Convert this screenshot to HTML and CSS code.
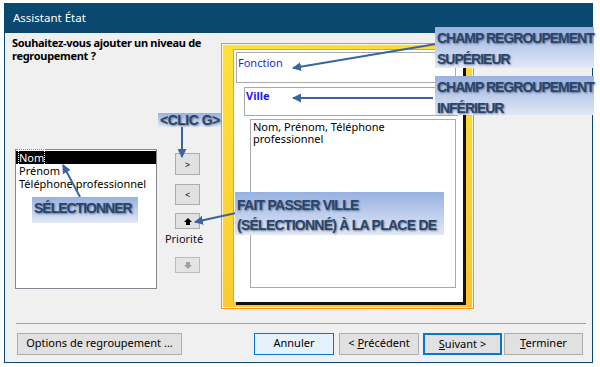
FILE: index.html
```html
<!DOCTYPE html>
<html lang="fr">
<head>
  <meta charset="UTF-8" />
  <title>Assistant État</title>
  <link rel="stylesheet" href="styles.css">
</head>
<body>
  <div class="window">
    <div class="title-bar">Assistant État</div>
    <div class="client">
      <div class="main">
        <div class="left-pane">
          <p class="question">Souhaitez-vous ajouter un niveau de<br />regroupement ?</p>
          <div class="picker">
            <ul class="field-list">
              <li class="selected"><span>Nom</span></li>
              <li>Prénom</li>
              <li>Téléphone professionnel</li>
            </ul>
            <div class="move-buttons">
              <button class="small-btn btn-add">&gt;</button>
              <button class="small-btn btn-remove">&lt;</button>
              <button class="small-btn btn-up">
                <svg width="8" height="7" viewBox="0 0 8 7"><polygon points="4,0 8,4 6,4 6,7 2,7 2,4 0,4" fill="#000"/></svg>
              </button>
              <span class="priority">Priorité</span>
              <button class="small-btn btn-down" disabled>
                <svg width="8" height="7" viewBox="0 0 8 7"><polygon points="4,7 8,3 6,3 6,0 2,0 2,3 0,3" fill="#a0a0a0"/></svg>
              </button>
            </div>
          </div>
        </div>

        <div class="preview-frame">
          <div class="preview-page">
            <div class="group-box level-1"><span class="field-name">Fonction</span></div>
            <div class="group-box level-2"><span class="field-name strong">Ville</span></div>
            <div class="detail-box">Nom, Prénom, Téléphone<br />professionnel</div>
          </div>
        </div>
      </div>

      <div class="separator"></div>

      <div class="footer">
        <button class="footer-btn btn-options">Options de re<u>g</u>roupement ...</button>
        <button class="footer-btn btn-cancel">Annuler</button>
        <button class="footer-btn btn-prev">&lt; <u>P</u>récédent</button>
        <button class="footer-btn btn-next"><u>S</u>uivant &gt;</button>
        <button class="footer-btn btn-finish"><u>T</u>erminer</button>
      </div>
    </div>
  </div>

  <!-- Annotations -->
  <div class="annotations">
    <svg class="arrows" width="600" height="367" viewBox="0 0 600 367">
      <defs>
        <marker id="head" markerWidth="9" markerHeight="9" refX="8" refY="4.5" orient="auto" markerUnits="userSpaceOnUse">
          <path d="M0,0 L9,4.5 L0,9 Z" fill="#3b669c"/>
        </marker>
      </defs>
      <line x1="436" y1="44" x2="293" y2="68" marker-end="url(#head)"/>
      <line x1="433" y1="98" x2="293" y2="98" marker-end="url(#head)"/>
      <line x1="182" y1="127" x2="182" y2="157" marker-end="url(#head)"/>
      <line x1="80" y1="197" x2="63" y2="165" marker-end="url(#head)"/>
      <line x1="236" y1="213" x2="195" y2="222" marker-end="url(#head)"/>
    </svg>

    <div class="callout callout-upper">CHAMP REGROUPEMENT<br />SUPÉRIEUR</div>
    <div class="callout callout-lower">CHAMP REGROUPEMENT<br />INFÉRIEUR</div>
    <div class="callout callout-click">&lt;CLIC G&gt;</div>
    <div class="callout callout-select">SÉLECTIONNER</div>
    <div class="callout callout-priority">FAIT PASSER VILLE<br />(SÉLECTIONNÉ) À LA PLACE DE</div>
  </div>
</body>
</html>
```

FILE: styles.css
```css
* {
  box-sizing: border-box;
}

body {
  margin: 0;
  width: 600px;
  height: 367px;
  overflow: hidden;
  position: relative;
  background: #fff;
  color: #000;
  font-family: "Noto Sans", "DejaVu Sans", sans-serif;
  font-size: 11px;
}

/* Window */
.window {
  margin: 3px 0 0 4px;
  width: 589px;
}

.title-bar {
  height: 30px;
  background: #0b4870;
  color: #fff;
  font-size: 11.5px;
  line-height: 16px;
  padding: 7px 0 0 9px;
}

.client {
  height: 330px;
  background: #f0f0f0;
  border: 1px solid #0b4870;
  border-top: none;
}

.main {
  height: 290px;
  display: flex;
}

/* Left side */
.left-pane {
  width: 216px;
  padding: 3px 0 0 7px;
}

.question {
  margin: 0;
  font-weight: bold;
  font-size: 11px;
  line-height: 13px;
  letter-spacing: -0.3px;
  white-space: nowrap;
}

.picker {
  margin-top: 87px;
  display: flex;
  align-items: flex-start;
}

.field-list {
  width: 142px;
  height: 140px;
  margin: 0 0 0 3px;
  padding: 1px 0 0;
  list-style: none;
  background: #fff;
  border: 1px solid #828790;
}

.field-list li {
  height: 13px;
  line-height: 13px;
  padding-left: 3px;
  white-space: nowrap;
}

.field-list li.selected {
  background: #000;
  color: #fff;
}

.field-list li.selected span {
  outline: 1px dotted #fff;
  outline-offset: 0;
}

.move-buttons {
  width: 25px;
  margin-left: 18px;
  display: flex;
  flex-direction: column;
  align-items: center;
}

.small-btn {
  width: 25px;
  padding: 0;
  background: #e1e1e1;
  border: 1px solid #adadad;
  font-family: inherit;
  font-size: 9px;
  color: #000;
  display: flex;
  align-items: center;
  justify-content: center;
}

.btn-add {
  margin-top: 4px;
  height: 22px;
}

.btn-remove {
  margin-top: 9px;
  height: 21px;
}

.btn-up {
  margin-top: 8px;
  height: 16px;
}

.btn-down {
  margin-top: 11px;
  height: 16px;
  background: #e4e4e4;
  border-color: #bcbcbc;
}

.priority {
  margin-top: 3px;
  margin-right: 7px;
  line-height: 14px;
  white-space: nowrap;
  color: #1a0a1a;
}

/* Preview */
.preview-frame {
  margin-top: 10px;
  width: 253px;
  height: 266px;
  border: 1px solid #f7931e;
  box-shadow: inset 0 0 0 1px #fff6d0;
  background: linear-gradient(160deg, #ffe03a 0%, #fdd335 50%, #f9c22e 100%);
  padding: 5px 10px 6px 11px;
}

.preview-page {
  height: 100%;
  background: #fff;
  border-left: 1px solid #a9a9a9;
  border-top: 1px solid #a9a9a9;
  box-shadow: 3px 3px 0 #111;
  padding-top: 2px;
}

.group-box {
  border: 1px solid #a9a9a9;
}

.field-name {
  color: #1c1cf5;
  padding-left: 1px;
}

.field-name.strong {
  font-weight: bold;
}

.level-1 {
  margin: 0 7px 0 2px;
  height: 31px;
  padding-top: 3px;
  line-height: 14px;
}

.level-2 {
  margin: 4px 5px 0 10px;
  height: 29px;
  padding-top: 1px;
  line-height: 14px;
}

.detail-box {
  margin: 3px 7px 0 16px;
  height: 169px;
  border: 1px solid #a9a9a9;
  padding: 1px 0 0 2px;
  line-height: 12px;
}

/* Footer */
.separator {
  height: 1px;
  margin: 0 6px 0 11px;
  background: #a0a0a0;
}

.footer {
  display: flex;
  padding: 9px 0 0 12px;
}

.footer-btn {
  height: 22px;
  padding: 0 0 2px;
  background: #e1e1e1;
  border: 1px solid #adadad;
  font-family: inherit;
  font-size: 11px;
  line-height: 18px;
  color: #000;
}

.btn-options {
  width: 165px;
}

.btn-cancel {
  width: 80px;
  margin-left: 72px;
  background: #e5f1fb;
  border-color: #0078d7;
}

.btn-prev {
  width: 80px;
  margin-left: 5px;
}

.btn-next {
  width: 79px;
  margin-left: 4px;
  border: 2px solid #0078d7;
}

.btn-finish {
  width: 79px;
  margin-left: 2px;
}

/* Annotations overlay */
.annotations {
  position: absolute;
  top: 0;
  left: 0;
  width: 600px;
  height: 367px;
  pointer-events: none;
}

.arrows {
  position: absolute;
  top: 0;
  left: 0;
}

.arrows line {
  stroke: #3b669c;
  stroke-width: 2;
}

.callout {
  position: absolute;
  background: linear-gradient(#98b1e1, #e2e9f6);
  color: #2a4469;
  font-family: "Liberation Sans", Arial, sans-serif;
  font-weight: bold;
  font-size: 14px;
  letter-spacing: -1px;
  text-shadow: 1px 1px 2px rgba(20, 40, 70, 0.55);
  white-space: nowrap;
  padding-left: 2px;
}

.callout-upper {
  left: 435px;
  top: 27px;
  width: 159px;
  height: 41px;
  line-height: 21px;
  padding-top: 1px;
}

.callout-lower {
  left: 435px;
  top: 76px;
  width: 159px;
  height: 39px;
  line-height: 21px;
  padding-top: 1px;
}

.callout-click {
  left: 158px;
  top: 113px;
  width: 63px;
  height: 14px;
  line-height: 14px;
  letter-spacing: -0.5px;
}

.callout-select {
  left: 32px;
  top: 197px;
  width: 106px;
  height: 26px;
  line-height: 22px;
}

.callout-priority {
  left: 235px;
  top: 192px;
  width: 209px;
  height: 43px;
  line-height: 20px;
  padding-top: 3px;
  letter-spacing: -0.75px;
}
```
